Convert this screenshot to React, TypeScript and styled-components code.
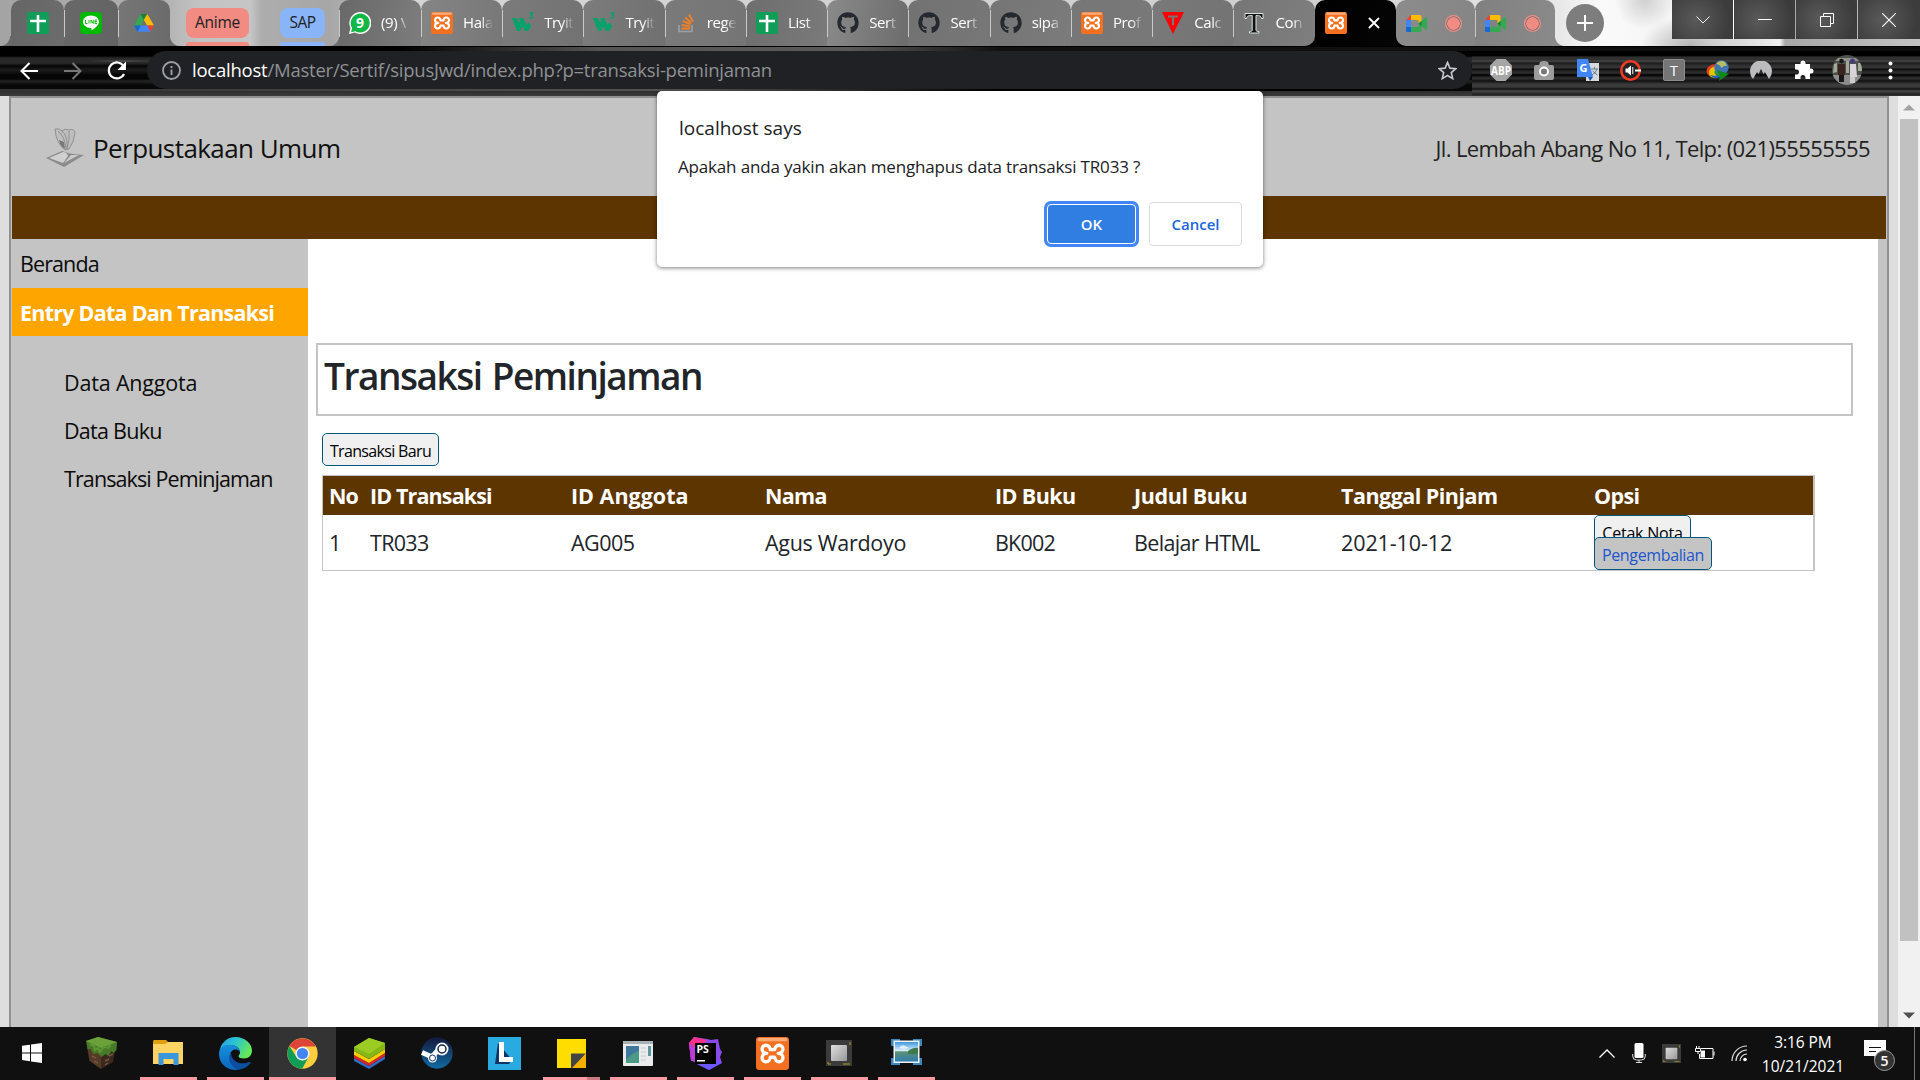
import React from "react";
import styled, { createGlobalStyle } from "styled-components";
import { FaGithub } from "react-icons/fa";

const Global = createGlobalStyle`
  *, *::before, *::after { box-sizing: border-box; }
  body { margin: 0; overflow: hidden; background: #dedede; font-family: "Open Sans", "Noto Sans", sans-serif; }
`;

const Screen = styled.div`
  position: relative; width: 1920px; height: 1080px; display: flex; flex-direction: column; overflow: hidden;
`;
const T = styled.span<{ $ls?: number }>`
  letter-spacing: ${(p) => p.$ls ?? 0}px; white-space: nowrap;
`;

/* ---------- tab strip ---------- */
const Strip = styled.div`
  height: 46px; flex: none; display: flex; align-items: stretch;
  background:
    radial-gradient(ellipse 50px 30px at 1690px 46px, #b5b5b5, transparent),
    radial-gradient(ellipse 30px 30px at 1645px 0, #d0d0d0, transparent),
    linear-gradient(90deg, #a4a4a4 0, #b0b0b0 160px, #c3c3c3 200px, #c6c6c6 250px, #adadad 262px, #a6a6a6 330px, #d5d5d5 420px, #cfcfcf 1300px, #e8e8e8 1560px, #fafafa 1600px, #f3f3f3 1700px, #dadada 1740px, #f0f0f0 1780px, #a8a8a8 1785px, #c4c4c4 1920px);
`;
const Wing = styled.div<{ $right?: boolean; $c: string; $w?: number }>`
  width: ${(p) => p.$w ?? 10}px; flex: none;
  background: radial-gradient(circle at ${(p) => (p.$right ? "100%" : "0")} 0, transparent 9.5px, ${(p) => p.$c} 10.5px) no-repeat 0 36px / 100% 10px;
`;
const Shell = styled.div<{ $w: number; $black?: boolean }>`
  width: ${(p) => p.$w}px; flex: none; display: flex;
  background: ${(p) => (p.$black ? "linear-gradient(transparent 50%, #000 50%)" : "none")};
`;
const TabBody = styled.div<{ $a: string; $b: string; $sep?: boolean; $r?: string; $pin?: boolean }>`
  flex: 1; min-width: 0; display: flex; align-items: center; position: relative;
  justify-content: ${(p) => (p.$pin ? "center" : "flex-start")};
  padding-left: ${(p) => (p.$pin ? 0 : 10)}px;
  border-radius: ${(p) => p.$r ?? "10px 10px 0 0"};
  background: linear-gradient(100deg, ${(p) => p.$a}, ${(p) => p.$b});
  &::before { content: ""; display: ${(p) => (p.$sep ? "block" : "none")}; position: absolute; left: 0; top: 10px; width: 1px; height: 27px; background: #c9c9c9; }
`;
const TabLabel = styled.span<{ $w: number }>`
  margin-left: 10px; width: ${(p) => p.$w}px; overflow: hidden; white-space: nowrap; line-height: 24px;
  font-size: 15px; letter-spacing: -0.4px; color: #fff; margin-bottom: 2px;
  mask-image: linear-gradient(90deg, #000 60%, transparent 100%);
`;
const Chips = styled.div`display: flex; gap: 31px; padding-left: 6px; width: 149px; flex: none;`;
const Chip = styled.div<{ $c: string; $w: number }>`
  width: ${(p) => p.$w}px; display: flex; flex-direction: column; justify-content: space-between; padding-top: 8px;
  font-size: 15.5px; line-height: 28px; text-align: center; color: #202124;
  & > span { height: 30px; border-radius: 8px; background: ${(p) => p.$c}; }
  &::after { content: ""; height: 4px; border-radius: 3px 3px 0 0; background: ${(p) => p.$c}; }
`;
const CloseX = styled.span`margin-left: 21px; height: 14px; padding-top: 1px; display: flex;`;
const Rec = styled.span`
  margin-left: 18px; width: 17px; height: 17px; border-radius: 50%; background: radial-gradient(circle, #f28b82 0 6px, #8c7876 6.4px 7px, #f28b82 7.4px);
`;
const NewTab = styled.div`
  width: 38px; height: 38px; margin: 4px 0 0 1px; border-radius: 50%; background: #7d7d7d; display: flex; align-items: center; justify-content: center;
`;
const WinControls = styled.div`
  margin-left: auto; width: 248px; height: 39px; display: grid; grid-template-columns: 61px 61px 61px 1fr; column-gap: 1px;
  & > div { display: flex; align-items: center; justify-content: center; background: radial-gradient(circle at 40% 50%, #5a5a5a, #3c3c3c 80%); }
  & > div:first-child { box-shadow: 1px 0 #fff; }
`;

/* ---------- toolbar ---------- */
const Toolbar = styled.div`
  height: 50px; flex: none; display: flex; align-items: center; padding: 0 0 0 19px;
  background:
    linear-gradient(90deg, transparent 90px, #4a4a4a 120px, transparent 160px) no-repeat 0 14px / 100% 2px,
    linear-gradient(90deg, transparent 400px, #555 600px, #5a5a5a 850px, #111 1000px, #2226 1920px) no-repeat 0 1px / 100% 4px,
    linear-gradient(90deg, #333 0, #555 700px, #000 1000px 1400px, #444 1900px) no-repeat 0 43px / 100% 2px,
    linear-gradient(#000 0 10px, #292929 12px 17px, #050505 20px, #1c1c1c 24px, #050505 29px 33px, #242424 35px, #080808 39px 43px, #2e2e2e 45px, #3b3b3b 50px);
`;
const Streaks = styled.div`
  flex: 1; height: 50px; display: flex; align-items: center;
  background: linear-gradient(transparent 0 10px, #303030 11px 14px, #4a4a4a 15px, #1c1c1c 17px, #333 20px 22px, #0a0a0a 23px, #2d2d2d 26px 27px, #000 29px, #333 32px, #111 35px, #3a3a3a 38px 41px, #111 43px, #4a4a4a 45px, #222 48px, #333 50px);
`;
const NavIcon = styled.span<{ $ml?: number }>`display: flex; margin: 0 0 1px ${(p) => p.$ml ?? 0}px;`;
const Omnibox = styled.div`
  margin: 0 0 2px 20px; width: 1325px; height: 38px; flex: none; border-radius: 19px; background: #202124;
  display: flex; align-items: center; padding: 0 15px 0 15px; font-size: 18.5px; color: #8f9194;
  & > svg:last-child { margin-left: auto; }
`;
const Url = styled(T)`margin: 0 0 2px 11px; & > b { font-weight: 400; color: #fff; }`;
const Ext = styled.span<{ $w: number; $ml: number }>`
  width: ${(p) => p.$w}px; margin: 0 0 2px ${(p) => p.$ml}px; display: flex; justify-content: center; flex: none;
`;
const TBadge = styled.span`
  width: 22px; height: 22px; border-radius: 2px; background: #757575; border: 1px solid #8c8c8c; color: #fff; font-size: 15px; line-height: 20px; text-align: center;
`;
const Avatar = styled.span`width: 30px; height: 30px; border-radius: 50%; overflow: hidden; display: flex;`;

/* ---------- page ---------- */
const Viewport = styled.div`height: 931px; flex: none; display: flex; background: #dedede; padding-left: 9px;`;
const Page = styled.div`
  width: 1880px; flex: none; border: 2px solid #919191; border-bottom: 0; background: #c4c4c4; padding: 0 1px; display: flex; flex-direction: column;
`;
const Header = styled.header`
  height: 98px; flex: none; display: flex; align-items: center; padding: 1px 16px 0 33px; font-size: 26px; color: #111;
`;
const Address = styled(T)`margin-left: auto; font-size: 22px; color: #222;`;
const Brand = styled(T)`margin-left: 8px;`;
const Bar = styled.div`height: 43px; flex: none; background: #5c3500;`;
const Columns = styled.div`flex: 1; display: flex; min-height: 0;`;
const Side = styled.nav`width: 296px; flex: none; font-size: 21.5px; color: #0b0b0b;`;
const SideItem = styled.div<{ $active?: boolean }>`
  height: ${(p) => (p.$active ? 48 : 49)}px; line-height: ${(p) => (p.$active ? 49 : 49)}px; padding-left: 8px;
  ${(p) => p.$active && "background: #ffa500; color: #fff; font-weight: 700;"}
`;
const SubList = styled.div`padding: 23px 0 0 52px; line-height: 48px; & > div { height: 48px; }`;
const Main = styled.main`width: 1570px; background: #fff; padding: 104px 0 0 8px;`;
const Title = styled.h1`
  margin: 0; width: 1537px; height: 73px; border: 2px solid #c4c4c4; padding: 0 0 8px 6px; display: flex; align-items: center;
  font-size: 37px; font-weight: 600; color: #212529; word-spacing: 2px;
`;
const Btn = styled.button<{ $w: number; $gray?: boolean; $up?: boolean }>`
  display: block; width: ${(p) => p.$w}px; height: 33px; padding: 0; border: 1px solid #00587f; border-radius: 5px; font: 400 16px/33px "Open Sans", sans-serif;
  background: ${(p) => (p.$gray ? "#c4c4c4" : "#f0f0f0")}; color: ${(p) => (p.$gray ? "#1a56cc" : "#000")};
  margin-top: ${(p) => (p.$up ? -11 : 0)}px; position: relative; padding-top: 1px;
`;
const Body = styled.div`padding: 17px 0 0 6px;`;
const Table = styled.div`margin-top: 9px; width: 1493px; border: 1px solid #c4c4c4; border-right-width: 2px; color: #212529; font-size: 21.5px;`;
const Row = styled.div<{ $head?: boolean }>`
  display: grid; grid-template-columns: 41px 201px 194px 230px 139px 207px 253px 1fr; padding-left: 6px; align-items: center;
  height: ${(p) => (p.$head ? 39 : 55)}px;
  ${(p) => p.$head && "background: #5c3500; color: #fff; font-weight: 700;"}
`;
const Scroll = styled.div`
  margin-left: auto; width: 22px; background: #f1f1f1; display: flex; flex-direction: column; align-items: center;
`;
const Arrow = styled.div<{ $down?: boolean }>`
  height: 23px; margin-top: ${(p) => (p.$down ? "auto" : 0)}; display: flex; align-items: center;
`;
const Thumb = styled.div`width: 18px; height: 822px; background: #c1c1c1;`;

/* ---------- dialog ---------- */
const Dialog = styled.div`
  position: absolute; left: 657px; top: 91px; width: 606px; height: 176px; border-radius: 5px; background: #fff; color: #202124;
  box-shadow: 0 1px 4px rgba(0, 0, 0, 0.5); padding: 23px 21px 0; display: flex; flex-direction: column;
`;
const DTitle = styled.div`font-size: 19px; line-height: 28px; height: 39px; padding-left: 1px;`;
const DText = styled.div`font-size: 17px; line-height: 27px; height: 49px;`;
const DButtons = styled.div`display: flex; justify-content: flex-end; gap: 13px; align-items: center;`;
const DBtn = styled.button<{ $ok?: boolean }>`
  width: ${(p) => (p.$ok ? 89 : 93)}px; height: ${(p) => (p.$ok ? 40 : 44)}px; padding: 0 0 1px; border-radius: 4px; font: 600 15px "Open Sans", sans-serif;
  border: 1px solid ${(p) => (p.$ok ? "#fff" : "#dadce0")}; background: ${(p) => (p.$ok ? "#317ee3" : "#fff")}; color: ${(p) => (p.$ok ? "#fff" : "#1a66dc")};
  box-shadow: ${(p) => (p.$ok ? "0 0 0 3px #4285f4" : "none")};
`;

/* ---------- taskbar ---------- */
const Taskbar = styled.footer`height: 53px; background: #101010; display: flex; color: #fff;`;
const Task = styled.div<{ $on?: boolean; $open?: boolean; $two?: boolean; $first?: boolean }>`
  width: 67.1px; margin-left: ${(p) => (p.$first ? 0.8 : 0)}px; flex: none; display: flex; align-items: center; justify-content: center; position: relative;
  padding: 0 ${(p) => (p.$first ? 4 : 0)}px 1px 0;
  background: ${(p) => (p.$on ? "#333" : "transparent")};
  &::after {
    content: ""; position: absolute; bottom: 0; height: 3px; left: ${(p) => (p.$on ? 0 : 5)}px; right: ${(p) => (p.$on ? 0 : 5)}px;
    background: ${(p) => (p.$two ? "linear-gradient(90deg, #ff99a4 44px, #c87a83 44px)" : p.$on || p.$open ? "#ff99a4" : "transparent")};
  }
`;
const Tray = styled.div`margin-left: auto; display: flex; align-items: center; width: 321px; padding-bottom: 1px;`;
const TrayIcon = styled.span<{ $w: number; $ml?: number }>`width: ${(p) => p.$w}px; margin-left: ${(p) => p.$ml ?? 0}px; display: flex; justify-content: center; flex: none;`;
const Clock = styled.div`
  width: 90px; margin-left: 10px; display: flex; flex-direction: column; align-items: center; font-size: 15.5px; line-height: 24px; padding-top: 2px;
`;
const Notif = styled.div`width: 34px; height: 34px; margin: 8px 0 0 16px; position: relative;`;
const Count = styled.span`
  position: absolute; left: 10px; top: 10px; width: 21px; height: 21px; border-radius: 50%; background: #333; border: 1px solid #999; font-size: 14px; font-weight: 600; line-height: 19px; text-align: center;
`;
const ShowDesktop = styled.div`width: 6px; height: 53px; margin-left: auto; border-left: 1px solid #777; align-self: stretch;`;

/* ---------- icons ---------- */
const Sheets = () => (
  <svg width="22" height="22" viewBox="0 0 22 22"><rect width="22" height="22" rx="2" fill="#0f9d58" /><path d="M11 3v17M3 9h16" stroke="#fff" strokeWidth="2.6" /></svg>
);
const Line = () => (
  <svg width="22" height="22" viewBox="0 0 22 22"><rect width="22" height="22" rx="4" fill="#00b900" /><path d="M11 3.500c4.500 0 8 2.900 8 6.300 0 3.600-5 7.200-7.500 8.700.2-1.500 0-2.300-.9-2.400C6.300 15.800 3 13.200 3 9.800 3 6.400 6.600 3.500 11 3.500z" fill="#fff" /><path d="M5.500 8v3.500h2M9 8v3.500M11 11.500V8l2.300 3.500V8M17 8h-2v3.500h2M15 9.800h2" stroke="#00b900" fill="none" strokeWidth=".9" /></svg>
);
const Drive = () => (
  <svg width="20" height="18" viewBox="0 0 87 78"><path d="M29 0L0 50l15 27 28-52z" fill="#34a853" /><path d="M29 0h29L43 25z" fill="#188038" /><path d="M58 0l29 50H57L43 25z" fill="#fbbc04" /><path d="M30 50h28l14 27H15z" fill="#4285f4" /><path d="M0 50h30L15 77z" fill="#1967d2" /><path d="M57 50h30L72 77z" fill="#ea4335" /></svg>
);
const WhatsApp = () => (
  <svg width="22" height="22" viewBox="0 0 22 22"><path d="M11 0a11 11 0 1 1-5 20.600L0 22l1.500-6A11 11 0 0 1 11 0z" fill="#fff" /><path d="M11 1.500a9.500 9.500 0 1 1-4.600 17.700L2 20.200l1.100-4.300A9.500 9.500 0 0 1 11 1.500z" fill="#12b845" /><text x="11" y="16" fontSize="14" fontWeight="700" fill="#fff" textAnchor="middle" fontFamily="Open Sans">9</text></svg>
);
const Xampp = ({ s = 22 }: { s?: number }) => (
  <svg width={s} height={s} viewBox="0 0 22 22"><rect width="22" height="22" rx="2.200" fill="#f37021" /><rect x="1" y=".6" width="20" height="2.200" rx="1" fill="#f9ab78" /><path d="M7.200 10.900C3 10.900 3.200 5.500 6.600 5.500c1.800 0 2.800 1.500 2.900 2.900h3c.1-1.400 1.100-2.900 2.900-2.900 3.400 0 3.600 5.400-.6 5.400 4.200 0 4 5.600.6 5.600-1.800 0-2.800-1.500-2.900-3h-3c-.1 1.500-1.100 3-2.900 3-3.400 0-3.600-5.600.6-5.600z" stroke="#fff" strokeWidth="2.200" fill="none" strokeLinejoin="round" /></svg>
);
const W3 = () => (
  <svg width="22" height="22" viewBox="0 0 22 22"><path d="M0 6h4.600l2.300 5 1.200-2.200L7 6h4.300l3.500 7 1.600-2.500 3 3.500-3.200 5h-3.200l-2.600-4.500L8 19H5z" fill="#04a36b" /><path d="M17.500 1h3.300l-1.600 2.200c2 .2 1.700 3-.2 3-.9 0-1.400-.5-1.600-1.100" stroke="#04a36b" strokeWidth="1.300" fill="none" /></svg>
);
const Stack = () => (
  <svg width="22" height="20" viewBox="-3 0 22 20"><path d="M1 12v6.500h13V12" stroke="#9a9fa3" strokeWidth="1.700" fill="none" /><path d="M3.500 15.500h8.500M3.700 12l8.400 1.400M4.800 8l7.700 3.300M7.300 4.500l6 5.500M11 1.500l4 7" stroke="#f48024" strokeWidth="1.800" /></svg>
);
const TriT = () => (
  <svg width="22" height="22" viewBox="0 0 22 22"><path d="M0 0h22L11 22z" fill="#f00" /><path d="M6 4.500h10M11 4.500V13" stroke="#777" strokeWidth="2.200" /></svg>
);
const SerifT = () => (
  <svg width="22" height="22" viewBox="0 0 22 22"><path d="M2 1.500h18v5h-1.500C18 4 17 3.500 13 3.500V18c0 1 .8 1.500 3 1.500V21H6.500v-1.500c2 0 2.700-.5 2.700-1.500V3.500C5 3.500 4 4 3.500 6.500H2z" fill="#111" stroke="#d8e6df" strokeWidth="1" /></svg>
);
const Meet = () => (
  <svg width="21" height="17" viewBox="0 0 21 17"><path d="M5 0v5H0z" fill="#ea4335" /><path d="M5 0h9q1.500 0 1.500 1.500V7l-3 2V5H5z" fill="#fbbc04" /><path d="M0 5h5v7H0z" fill="#4285f4" /><path d="M0 12h5v5H1.500Q0 17 0 15.500z" fill="#1967d2" /><path d="M5 12h7.500V8.500l3 2v5Q15.500 17 14 17H5z" fill="#34a853" /><path d="M12.500 8.500L20 2q1-.5 1 .6v12q0 1-1 .4z" fill="#34a853" /><path d="M12.500 8.500l3-2.600v5.200z" fill="#188038" /></svg>
);
const Chrome = () => (
  <svg width="31" height="31" viewBox="0 0 48 48"><circle cx="24" cy="24" r="23.500" fill="#ffcd40" /><path d="M24 24L3.800 12.200A23.500 23.500 0 0 1 44.500 13H24z" fill="#db4437" /><path d="M3.800 12.200L14.500 29.500 24 35l9.500-5.500L23.500 47.500A23.500 23.500 0 0 1 3.800 12.200z" fill="#0f9d58" /><circle cx="24" cy="24" r="11" fill="#f1f1f1" /><circle cx="24" cy="24" r="8.700" fill="#4285f4" /></svg>
);
const Edge = () => (
  <svg width="33" height="33" viewBox="0 0 33 33"><defs><linearGradient id="ea" x1="0" y1="0" x2="1" y2=".4"><stop offset="0" stopColor="#1f9fe0" /><stop offset=".5" stopColor="#2cc4d4" /><stop offset="1" stopColor="#63e85a" /></linearGradient><linearGradient id="eb" x1="0" y1="0" x2="0" y2="1"><stop offset="0" stopColor="#1690dc" /><stop offset="1" stopColor="#0a65bd" /></linearGradient></defs><path d="M.5 15C1.500 6 8 0 16.500 0 26 0 33 6.500 33 13.500c0 5-3.500 8-8 8-3 0-5.500-1-5.500-2.300 0-1 1.500-1.500 1.500-4C21 11.500 17 8 11.500 8 5.500 8 1.500 11.500.5 15z" fill="url(#ea)" /><path d="M0 17C0 11 5 7.800 11 7.800c5.500 0 9.800 3.400 10 7-1.500-2-3.500-2.500-5-2.300-4 .6-6 5-5 9.500 1 5.500 5 9.500 10 10.500C9 35 0 27 0 17z" fill="url(#eb)" /><path d="M12 15.500c-4 6-1 14.500 8 17C25 32 29 29.500 31.500 26c.5-1-.5-1.300-1.200-1C22 28.500 12 25 12 15.500z" fill="#0c4ea0" /></svg>
);
const WinLogo = () => (
  <svg width="20" height="20" viewBox="0 0 20 20"><path d="M0 2.800l8-1.100v7.700H0zM9 1.500L20 0v9.400H9zM0 10.400h8v7.800l-8-1.100zM9 10.400h11V20L9 18.400z" fill="#fff" /></svg>
);
const Grass = () => (
  <svg width="33" height="33" viewBox="0 0 33 33"><path d="M2 10l14 8v14L4.500 24z" fill="#553a28" /><path d="M31 10l-15 8v14l12-7z" fill="#3c281c" /><path d="M1 4L13 0l19 5-.5 8-3 3-2-2-3 5-3-2-4 3-4-4-4 1-3-5-3 0z" fill="#477a28" /><path d="M1 4L13 0l19 5-16 6z" fill="#6ba03b" /><path d="M5 7l4 2 1 4 3-2 2 4 4-5 4 1 3-3" stroke="#5e9635" fill="none" strokeWidth="2" /><path d="M7 19l4 2M9 24l4 2M20 24l4-2M20 28l3-2M24 19l4-2" stroke="#76563e" strokeWidth="1.500" /></svg>
);
const Folder = () => (
  <svg width="31" height="26" viewBox="0 0 31 26"><path d="M1 0h12l3 3-2 3H0V1z" fill="#e09f12" /><path d="M0 4h12l3-2h15v22H0z" fill="#fdd463" /><path d="M5.500 25V13h20v12h-5v-6h-10v6z" fill="#3c96dc" /></svg>
);
const BlueStacks = () => (
  <svg width="31" height="31" viewBox="0 0 31 31"><path d="M0 20l15 8 16-10v3L15 31 0 23z" fill="#2e6cc5" /><path d="M0 17l15 8 16-10v3L15 28 0 20z" fill="#d9232e" /><path d="M0 13l15 8 16-10v4L15 25 0 17z" fill="#fc0" /><path d="M0 9L15 0l16 5v6L15 21 0 13z" fill="#85b715" /><path d="M0 9L15 0l16 5-16 11z" fill="#9bcc24" /></svg>
);
const Steam = () => (
  <svg width="32" height="32" viewBox="0 0 32 32"><defs><linearGradient id="st" x1="0" y1="0" x2="0" y2="1"><stop offset="0" stopColor="#141a3c" /><stop offset="1" stopColor="#116ba5" /></linearGradient></defs><circle cx="16" cy="16" r="15.700" fill="url(#st)" /><path d="M1 15.500l10 4.500 7-8" stroke="#fff" strokeWidth="5" fill="none" /><circle cx="11.500" cy="21" r="4.500" fill="#fff" /><circle cx="11.500" cy="21" r="3" fill="none" stroke="#16346b" strokeWidth="1" /><circle cx="21" cy="12" r="6.500" fill="#fff" /><circle cx="21" cy="12" r="4" fill="#fff" stroke="#16254f" strokeWidth="1.500" /></svg>
);
const LApp = () => (
  <svg width="33" height="33" viewBox="0 0 33 33"><rect width="33" height="33" fill="#29abe2" /><path d="M10 6L7 27h14l3-4z" fill="#0e3565" /><path d="M11 5h5v15h9v5H11z" fill="#fff" /></svg>
);
const Note = () => (
  <svg width="29" height="29" viewBox="0 0 29 29"><path d="M0 0h29v29H0z" fill="#fd0" /><path d="M14 14.500h15L16 29h-2z" fill="#444" /><path d="M29 14.500V29H15z" fill="#f5b000" /></svg>
);
const WinApp = () => (
  <svg width="30" height="25" viewBox="0 0 30 25"><rect width="30" height="25" rx="1" fill="#e9ebed" /><rect width="30" height="3" fill="#a9b0b6" /><rect x="3" y="5" width="13" height="17" fill="#4a9a86" /><path d="M3 5h13v5Q9 12 3 19z" fill="#3f789c" /><path d="M18 7h5M18 11h5M18 15h5M18 19h5" stroke="#c8cccf" /><rect x="25" y="5" width="3" height="10" fill="#5c94a0" /></svg>
);
const PhpStorm = () => (
  <svg width="33" height="33" viewBox="0 0 33 33"><path d="M0 6L5 0l13 2 4 1 7-1 2 10 2 3-2 5 2 6-13 7-12-6-6-4z" fill="#8a4be8" /><path d="M0 6L5 0l13 3-6 6-6 5-4 8z" fill="#ff318c" /><path d="M8 27l7-2 11-2 6 3-12 7z" fill="#6b57ff" /><path d="M0 6l6 5v13H2z" fill="#b93bd8" /><rect x="6" y="6" width="21" height="21" fill="#000" /><text x="7.500" y="16" fontSize="10.500" fontWeight="700" fill="#fff" fontFamily="Open Sans">PS</text><path d="M8 23.800h8" stroke="#fff" strokeWidth="1.500" /></svg>
);
const Cpu = ({ s = 26 }: { s?: number }) => (
  <svg width={s} height={s} viewBox="0 0 26 26"><defs><linearGradient id="cp" x1="0" y1="0" x2="1" y2="1"><stop offset="0" stopColor="#ddd" /><stop offset="1" stopColor="#999" /></linearGradient></defs><rect width="26" height="26" fill="#3b3b3b" /><rect x="5" y="5" width="16" height="16" rx="1" fill="url(#cp)" /><path d="M2 22v2h3M17 24h7M24 2v3" stroke="#b39a22" fill="none" /></svg>
);
const Photo = () => (
  <svg width="31" height="28" viewBox="0 0 31 28"><defs><linearGradient id="ph" x1="0" y1="0" x2="0" y2="1"><stop offset="0" stopColor="#3f97dc" /><stop offset=".45" stopColor="#dceefa" /><stop offset=".5" stopColor="#5d9474" /><stop offset=".65" stopColor="#4d8a86" /><stop offset="1" stopColor="#2f7db0" /></linearGradient></defs><path d="M0 0h9v7H0zM22 0h9v7h-9zM0 19h9v7H0zM22 19h9v7h-9z" fill="#3a86bf" /><rect x="2.500" y="1.500" width="26" height="22.500" fill="#eef2f3" /><rect x="4" y="3" width="23" height="19.500" fill="url(#ph)" /><path d="M8 9q3-4 6-2t4 1q-3 3-10 1z" fill="#fff" opacity=".7" /><path d="M17 12q6-4 10-3v6H17z" fill="#3f7a4c" /></svg>
);

const grayTabs: { icon: React.ReactNode; label: string; a: string; b: string }[] = [
  { icon: <Xampp />, label: "Hala", a: "#858585", b: "#777" },
  { icon: <W3 />, label: "Tryit", a: "#7b7b7b", b: "#727272" },
  { icon: <W3 />, label: "Tryit", a: "#7c7c7c", b: "#707070" },
  { icon: <Stack />, label: "rege", a: "#7a7a7a", b: "#757575" },
  { icon: <Sheets />, label: "List", a: "#6e6e6e", b: "#7a7a7a" },
  { icon: <FaGithub size={22} color="#24292f" />, label: "Sert", a: "#8a8a8a", b: "#6c6c6c" },
  { icon: <FaGithub size={22} color="#24292f" />, label: "Sert", a: "#727272", b: "#777" },
  { icon: <FaGithub size={22} color="#24292f" />, label: "sipa", a: "#757575", b: "#7b7b7b" },
  { icon: <Xampp />, label: "Prof", a: "#777", b: "#787878" },
  { icon: <TriT />, label: "Calc", a: "#797979", b: "#737373" },
  { icon: <SerifT />, label: "Con", a: "#767676", b: "#7e7e7e" },
];
const heads: [string, number][] = [["No", -0.9], ["ID Transaksi", -0.87], ["ID Anggota", 0], ["Nama", -0.7], ["ID Buku", -0.6], ["Judul Buku", -0.4], ["Tanggal Pinjam", -0.52], ["Opsi", -0.6]];
const cells: [string, number][] = [["1", 0], ["TR033", -0.7], ["AG005", -0.5], ["Agus Wardoyo", -0.3], ["BK002", -0.8], ["Belajar HTML", -0.64], ["2021-10-12", -0.1]];

export default function App() {
  return (
    <Screen>
      <Global />
      <Strip>
        <Wing $c="#6a6a6a" $w={11} />
        <Shell $w={53.3}><TabBody $pin $a="#666" $b="#6c6c6c"><Sheets /></TabBody></Shell>
        <Shell $w={53.3}><TabBody $pin $sep $a="#686868" $b="#636363"><Line /></TabBody></Shell>
        <Shell $w={52.4}><TabBody $pin $sep $a="#777" $b="#6a6a6a"><Drive /></TabBody></Shell>
        <Wing $c="#6a6a6a" $right />
        <Chips>
          <Chip $c="#f28b82" $w={63}><T $ls={-0.3}>Anime</T></Chip>
          <Chip $c="#8ab4f8" $w={45}><T $ls={-0.5}>SAP</T></Chip>
        </Chips>
        <Wing $c="#6f6f6f" />
        <Shell $w={82}><TabBody $sep $a="#686868" $b="#7d7d7d"><WhatsApp /><TabLabel $w={29}>(9) \</TabLabel></TabBody></Shell>
        {grayTabs.map((t, i) => (
          <Shell key={i} $w={81.25} $black={i === 10}>
            <TabBody $sep $a={t.a} $b={t.b} $r={i === 10 ? "10px 10px 10px 0" : undefined}>
              {t.icon}
              <TabLabel $w={30}>{t.label}</TabLabel>
            </TabBody>
          </Shell>
        ))}
        <Shell $w={81}>
          <TabBody $a="#000" $b="#050505"><Xampp />
            <CloseX><svg width="12" height="12" viewBox="0 0 12 12"><path d="M1 1l10 10M11 1L1 11" stroke="#fff" strokeWidth="1.900" /></svg></CloseX>
          </TabBody>
        </Shell>
        <Shell $w={79.5} $black><TabBody $a="#8c8c8c" $b="#858585" $r="10px 10px 0 10px"><Meet /><Rec /></TabBody></Shell>
        <Shell $w={79.5}><TabBody $sep $a="#808080" $b="#8a8a8a"><Meet /><Rec /></TabBody></Shell>
        <Wing $c="#8a8a8a" $right />
        <NewTab><svg width="16" height="16" viewBox="0 0 16 16"><path d="M8 0v16M0 8h16" stroke="#fff" strokeWidth="2" /></svg></NewTab>
        <WinControls>
          <div><svg width="14" height="8" viewBox="0 0 14 8"><path d="M.5.5L7 7 13.500.5" stroke="#fff" fill="none" /></svg></div>
          <div><svg width="14" height="1" viewBox="0 0 14 1"><rect width="14" height="1" fill="#fff" /></svg></div>
          <div><svg width="14" height="14" viewBox="0 0 14 14"><path d="M.5 3.500h10v10H.5zM3.500 3V.5h10v10H11" stroke="#fff" fill="none" /></svg></div>
          <div><svg width="14" height="14" viewBox="0 0 14 14"><path d="M0 0l14 14M14 0L0 14" stroke="#fff" strokeWidth="1.100" /></svg></div>
        </WinControls>
      </Strip>

      <Toolbar>
        <NavIcon $ml={1}><svg width="18" height="18" viewBox="0 0 18 18"><path d="M18 9H1.500M9.500 1L1.500 9l8 8" stroke="#fff" strokeWidth="2" fill="none" /></svg></NavIcon>
        <NavIcon $ml={26}><svg width="18" height="18" viewBox="0 0 18 18"><path d="M0 9h16.500M8.500 1l8 8-8 8" stroke="#777" strokeWidth="2" fill="none" /></svg></NavIcon>
        <NavIcon $ml={25}><svg width="20" height="20" viewBox="0 0 20 20"><path d="M16.500 5A8 8 0 1 0 17 13" stroke="#fff" strokeWidth="2.200" fill="none" /><path d="M19 .5V9h-8.500z" fill="#fff" /></svg></NavIcon>
        <Omnibox>
          <svg width="19" height="19" viewBox="0 0 19 19"><circle cx="9.500" cy="9.500" r="8.500" fill="none" stroke="#9aa0a6" strokeWidth="1.800" /><path d="M9.500 8.500V14M9.500 5v2" stroke="#9aa0a6" strokeWidth="1.900" /></svg>
          <Url $ls={-0.23}><b>localhost</b>/Master/Sertif/sipusJwd/index.php?p=transaksi-peminjaman</Url>
          <svg width="19" height="19" viewBox="0 0 20 20"><path d="M10 1.500l2.500 6 6.300.5-4.800 4.200 1.500 6.300L10 15.200l-5.500 3.300L6 12.200 1.200 8l6.300-.5z" fill="none" stroke="#c4c7cb" strokeWidth="1.700" /></svg>
        </Omnibox>
        <Streaks>
          <Ext $w={22} $ml={18}><svg width="22" height="22" viewBox="0 0 22 22"><path d="M6.500 0h9L22 6.500v9L15.500 22h-9L0 15.500v-9z" fill="#a6a6a6" /><text x="11" y="15.500" fontSize="12" fontWeight="700" fill="#fff" textAnchor="middle" fontFamily="Open Sans" textLength="20" lengthAdjust="spacingAndGlyphs">ABP</text></svg></Ext>
          <Ext $w={20} $ml={22}><svg width="20" height="19" viewBox="0 0 20 19"><path d="M2 4h3l1-3 3-1h2l3 1 1 3h3q2 0 2 2v11q0 2-2 2H2q-2 0-2-2V6q0-2 2-2z" fill="#9d9d9d" /><circle cx="10" cy="10.500" r="4" fill="#777" stroke="#fff" strokeWidth="2" /></svg></Ext>
          <Ext $w={22} $ml={23}><svg width="22" height="22" viewBox="0 0 22 22"><rect x="9" y="4" width="13" height="18" fill="#d7d9dc" /><path d="M0 0h11l5 18H0z" fill="#4285f4" /><path d="M11 18h5l-3 4z" fill="#1a55b8" /><path d="M14 10h7M17.500 8v2M20 10q-1 4-5 6M15.500 12l5 4" stroke="#607d8b" fill="none" /><text x="2.500" y="13" fontSize="11" fontWeight="700" fill="#fff" fontFamily="Open Sans">G</text></svg></Ext>
          <Ext $w={21} $ml={21}><svg width="21" height="21" viewBox="0 0 21 21"><circle cx="10.500" cy="10.500" r="9.200" fill="#222" stroke="#f03a23" strokeWidth="2.600" /><path d="M5.500 8.500h2l3.500-3v10l-3.500-3h-2z" fill="#fff" /><path d="M12.800 7v7" stroke="#fff" /><path d="M15 10.500h6" stroke="#fff" strokeWidth="2" /></svg></Ext>
          <Ext $w={22} $ml={22}><TBadge>T</TBadge></Ext>
          <Ext $w={23} $ml={21}><svg width="23" height="21" viewBox="0 0 23 21"><path d="M11 4C0 4-3 13 5 17 2 11 6 8 11 7z" fill="#e04020" /><path d="M12 6C3 6 1 13 5 17q4 2 8-1Q6 14 12 9z" fill="#e9c400" /><path d="M4 15q4 5 10 2l1-3Q9 17 4 15z" fill="#1b63c4" /><path d="M12 8q-5 3-3 6l5 2V9z" fill="#20a030" /><circle cx="15.500" cy="7.500" r="7.200" fill="#3f75b3" /><path d="M10 4q4-5 9-2l2 4q-4-1-5 2-3-4-6-4z" fill="#b9bf61" /><path d="M11 10l12 4-10 7 1-5z" fill="#0b8a14" /></svg></Ext>
          <Ext $w={22} $ml={21}><svg width="22" height="18" viewBox="0 0 22 18"><path d="M3 18A11 11 0 1 1 19 18l-4-7-1.500 2L11 8l-2.500 5L7 11z" fill="#bcbcbf" /></svg></Ext>
          <Ext $w={20} $ml={22}><svg width="20" height="20" viewBox="0 0 20 20"><path d="M2 4h4.500V3a2.500 2.500 0 0 1 5 0v1H16v4.500h1a2.500 2.500 0 0 1 0 5h-1V19h-4.500v-1.500a2.500 2.500 0 0 0-5 0V19H1v-4.500h1.500a2.500 2.500 0 0 0 0-5H1V4z" fill="#fff" /></svg></Ext>
          <Ext $w={30} $ml={18}><Avatar><svg width="30" height="30" viewBox="0 0 30 30"><rect width="30" height="30" fill="#4c524c" /><path d="M0 3h30v3H0z" fill="#8f8f8b" /><path d="M2 9l3-1v9l-4 1zM14 6h3v12h-3zM26 8h4v8h-4z" fill="#a3a898" /><path d="M0 20h30v10H0z" fill="#8d8d8d" /><path d="M6 9h7v11H6z" fill="#3b241f" /><circle cx="9.500" cy="6" r="2.300" fill="#1c1512" /><path d="M7 20h5v7H7z" fill="#161616" /><path d="M18 9h6l1 13h-7z" fill="#d8d3d8" /><circle cx="20.500" cy="6" r="2.500" fill="#473a7c" /><path d="M18 22h5v6h-5z" fill="#ccc" /></svg></Avatar></Ext>
          <Ext $w={5} $ml={26}><svg width="5" height="19" viewBox="0 0 5 19"><circle cx="2.500" cy="2.500" r="2" fill="#fff" /><circle cx="2.500" cy="9.500" r="2" fill="#fff" /><circle cx="2.500" cy="16.500" r="2" fill="#fff" /></svg></Ext>
        </Streaks>
      </Toolbar>

      <Viewport>
        <Page>
          <Header>
            <svg width="40" height="40" viewBox="0 -6 40 40"><path d="M1 24l16-7 6 2 5 1 11 1-20 12z" fill="#8b8b8b" /><path d="M4 24l14-6q4 0 5 4l-5 7z" fill="#d0d0d0" /><path d="M10 -5q5-1 7 2 3-3 7-1 5-2 6 3-1 9-6 16l-4 1q-9-7-10-21z" fill="#bebebe" stroke="#909090" /><path d="M13-3q7 6 8 18M17-3q6 5 5 18M24-3q1 8-2 18" stroke="#909090" fill="none" /><path d="M14 6l5 2 1 7q-5-3-6-9z" fill="#777" /><path d="M26 21l8 0-15 8z" fill="#c9c9c9" /></svg>
            <Brand $ls={-0.57}>Perpustakaan Umum</Brand>
            <Address $ls={-0.62}>Jl. Lembah Abang No 11, Telp: (021)55555555</Address>
          </Header>
          <Bar />
          <Columns>
            <Side>
              <SideItem><T $ls={-0.9}>Beranda</T></SideItem>
              <SideItem $active><T $ls={-0.75}>Entry Data Dan Transaksi</T></SideItem>
              <SubList>
                <div><T $ls={-0.17}>Data Anggota</T></div>
                <div><T $ls={-0.74}>Data Buku</T></div>
                <div><T $ls={-0.9}>Transaksi Peminjaman</T></div>
              </SubList>
            </Side>
            <Main>
              <Title><T $ls={-1.48}>Transaksi Peminjaman</T></Title>
              <Body>
                <Btn $w={117}><T $ls={-0.66}>Transaksi Baru</T></Btn>
                <Table>
                  <Row $head>{heads.map(([h, ls]) => <T key={h} $ls={ls}>{h}</T>)}</Row>
                  <Row>
                    {cells.map(([c, ls]) => <T key={c} $ls={ls}>{c}</T>)}
                    <div>
                      <Btn $w={97}><T $ls={-0.2}>Cetak Nota</T></Btn>
                      <Btn $w={118} $gray $up><T $ls={-0.36}>Pengembalian</T></Btn>
                    </div>
                  </Row>
                </Table>
              </Body>
            </Main>
          </Columns>
        </Page>
        <Scroll>
          <Arrow><svg width="12" height="7" viewBox="0 0 12 7"><path d="M0 6.500L6 .5l6 6z" fill="#a3a3a3" /></svg></Arrow>
          <Thumb />
          <Arrow $down><svg width="12" height="7" viewBox="0 0 12 7"><path d="M0 .5h12l-6 6z" fill="#505050" /></svg></Arrow>
        </Scroll>
      </Viewport>

      <Taskbar>
        <Task $first><WinLogo /></Task>
        <Task><Grass /></Task>
        <Task $open><Folder /></Task>
        <Task $open><Edge /></Task>
        <Task $on><Chrome /></Task>
        <Task><BlueStacks /></Task>
        <Task><Steam /></Task>
        <Task><LApp /></Task>
        <Task $open $two><Note /></Task>
        <Task $open><WinApp /></Task>
        <Task $open><PhpStorm /></Task>
        <Task $open><Xampp s={33} /></Task>
        <Task $open><Cpu /></Task>
        <Task $open><Photo /></Task>
        <Tray>
          <TrayIcon $w={16}><svg width="16" height="9" viewBox="0 0 16 9"><path d="M.5 8.500L8 1l7.500 7.500" stroke="#fff" strokeWidth="1.300" fill="none" /></svg></TrayIcon>
          <TrayIcon $w={14} $ml={17}><svg width="14" height="20" viewBox="0 0 14 20"><rect x="2.500" y="0" width="9" height="15" rx="1.500" fill="#fff" /><path d="M.7 11v2q0 4 4 4h4.600q4 0 4-4v-2M7 17v2.500M4 19.500h6" stroke="#ddd" fill="none" /></svg></TrayIcon>
          <TrayIcon $w={19} $ml={16}><Cpu s={19} /></TrayIcon>
          <TrayIcon $w={20} $ml={14}><svg width="20" height="15" viewBox="0 0 20 15"><path d="M6 2.500h12v10H4.500V8" stroke="#fff" fill="none" /><path d="M19 5.500v4" stroke="#fff" /><path d="M5.500 8v3.500H10V4.500H6z" fill="#fff" /><path d="M1.500 0v2M4 0v2M.5 2.500h5v3H.5zM3 5.500V8" stroke="#fff" fill="none" /></svg></TrayIcon>
          <TrayIcon $w={17} $ml={16}><svg width="17" height="17" viewBox="0 0 17 17"><path d="M1 16A15 15 0 0 1 16 1M5 16A11 11 0 0 1 16 5M9 16a7 7 0 0 1 7-7" stroke="#ddd" strokeWidth="1.200" fill="none" /><circle cx="14" cy="14.500" r="1.800" fill="#fff" /></svg></TrayIcon>
          <Clock><T $ls={-0.1}>3:16 PM</T><T>10/21/2021</T></Clock>
          <Notif><svg width="22" height="22" viewBox="0 0 22 22"><path d="M0 0h22v16h-7l-4.500 5v-5H0z" fill="#fff" /><path d="M5 7.500h12M5 11.500h7" stroke="#111" /></svg><Count>5</Count></Notif>
          <ShowDesktop />
        </Tray>
      </Taskbar>

      <Dialog>
        <DTitle><T>localhost says</T></DTitle>
        <DText><T $ls={-0.17}>Apakah anda yakin akan menghapus data transaksi TR033 ?</T></DText>
        <DButtons><DBtn $ok>OK</DBtn><DBtn><T>Cancel</T></DBtn></DButtons>
      </Dialog>
    </Screen>
  );
}
